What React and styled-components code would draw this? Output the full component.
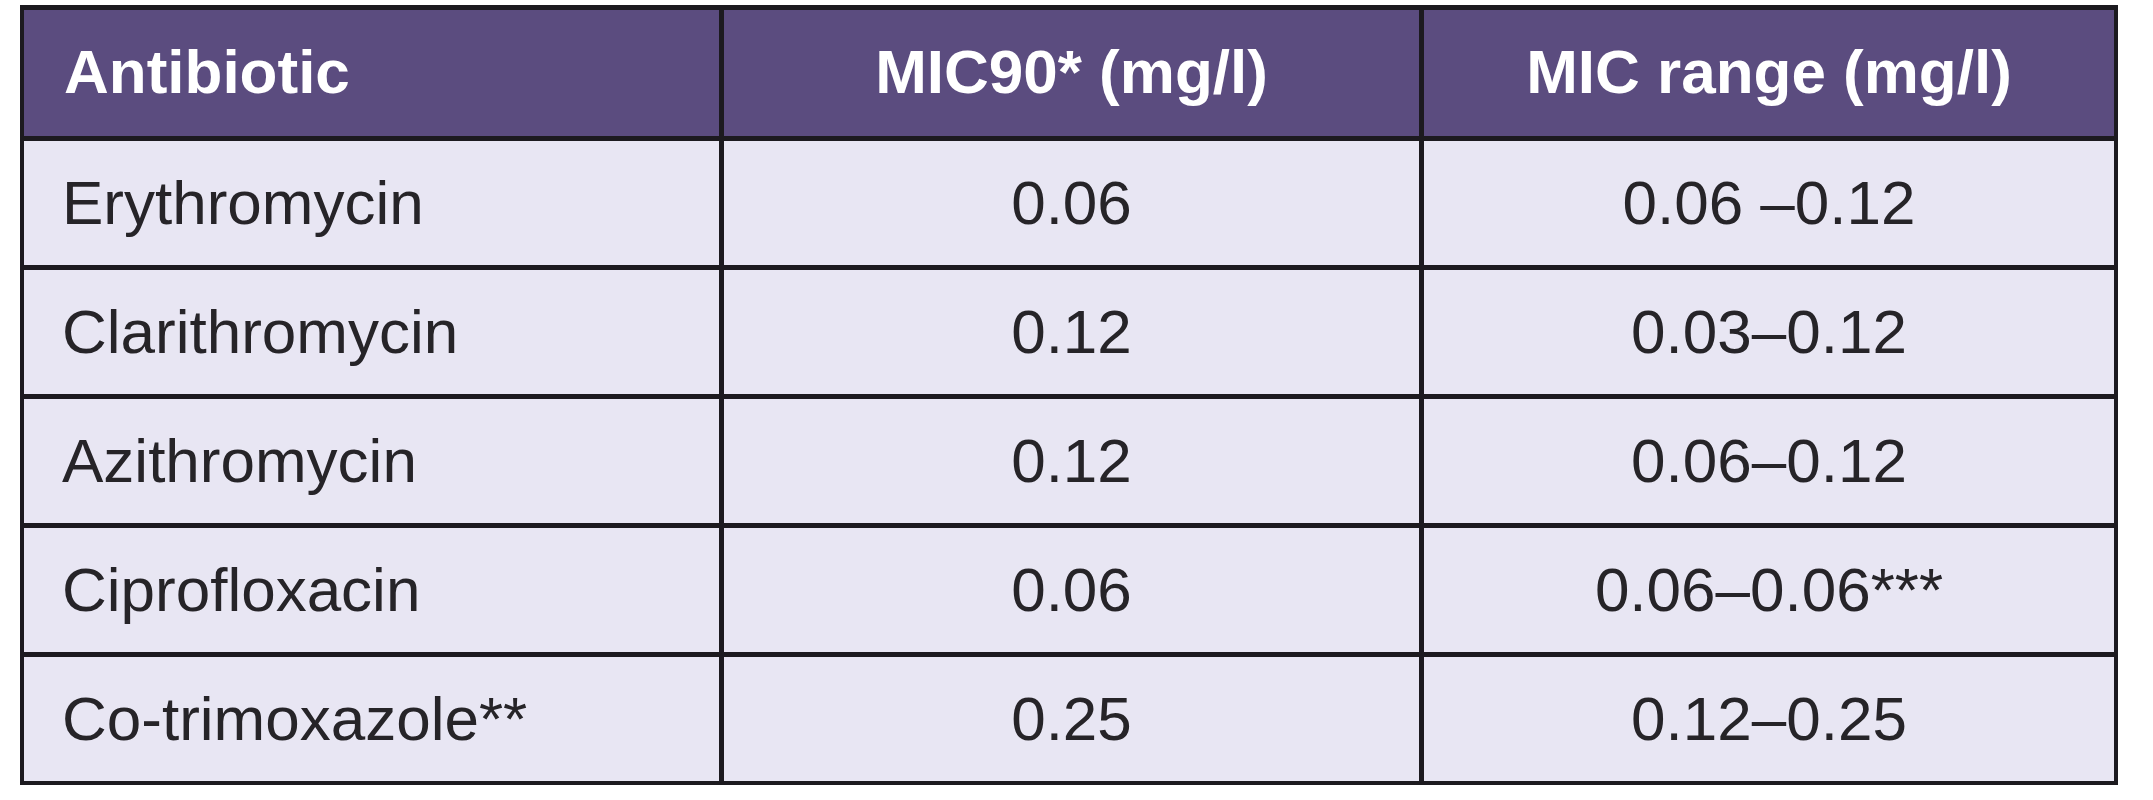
import React from "react";
import styled, { createGlobalStyle } from "styled-components";

const rows = [
  ["Erythromycin", "0.06", "0.06 –0.12"],
  ["Clarithromycin", "0.12", "0.03–0.12"],
  ["Azithromycin", "0.12", "0.06–0.12"],
  ["Ciprofloxacin", "0.06", "0.06–0.06***"],
  ["Co-trimoxazole**", "0.25", "0.12–0.25"],
];

export default () => {
  return (
    <>
      <GlobalStyle />
      <Table role="table">
        <HeadCell role="columnheader" align="left">Antibiotic</HeadCell>
        <HeadCell role="columnheader">MIC90* (mg/l)</HeadCell>
        <HeadCell role="columnheader">MIC range (mg/l)</HeadCell>
        {rows.map((r) =>
          r.map((v, i) => (
            <Cell key={r[0] + i} role="cell" align={i === 0 ? "left" : "center"}>
              {v}
            </Cell>
          ))
        )}
      </Table>
    </>
  );
};

const GlobalStyle = createGlobalStyle`
  body {
    margin: 5px 0 0 20px;
    background: #ffffff;
    font-family: "Liberation Sans", Arial, sans-serif;
  }
`;

const Table = styled.div`
  display: grid;
  grid-template-columns: 695px 695px 690px;
  grid-template-rows: 126px repeat(5, 124px);
  gap: 5px 5px;
  padding: 4px;
  width: fit-content;
  background-color: #1c1a1f;
  border-top: 1px solid #1c1a1f;
`;

const cellBase = `
  display: flex;
  align-items: center;
  font-size: 62px;
  line-height: 1;
  white-space: nowrap;
`;

const HeadCell = styled.div`
  ${cellBase}
  justify-content: ${(p) => (p.align === "left" ? "flex-start" : "center")};
  padding-left: ${(p) => (p.align === "left" ? "40px" : "0")};
  background-color: #5b4c7f;
  color: #ffffff;
  font-weight: bold;
  padding-bottom: 2px;
`;

const Cell = styled.div`
  ${cellBase}
  justify-content: ${(p) => (p.align === "left" ? "flex-start" : "center")};
  padding-left: ${(p) => (p.align === "left" ? "38px" : "0")};
  background-color: #e8e6f3;
  color: #262428;
`;
